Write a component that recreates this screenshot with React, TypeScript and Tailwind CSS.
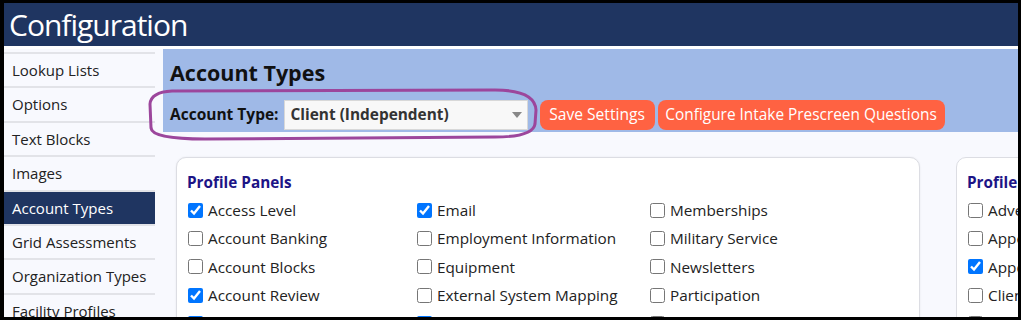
import React from "react";

const font = { fontFamily: '"Open Sans", "Noto Sans", Arial, sans-serif' };

const sideItems = [
  "Lookup Lists",
  "Options",
  "Text Blocks",
  "Images",
  "Account Types",
  "Grid Assessments",
  "Organization Types",
  "Facility Profiles",
];

const col1: [string, boolean][] = [
  ["Access Level", true],
  ["Account Banking", false],
  ["Account Blocks", false],
  ["Account Review", true],
  ["Addresses", true],
];
const col2: [string, boolean][] = [
  ["Email", true],
  ["Employment Information", false],
  ["Equipment", false],
  ["External System Mapping", false],
  ["Financial", true],
];
const col3: [string, boolean][] = [
  ["Memberships", false],
  ["Military Service", false],
  ["Newsletters", false],
  ["Participation", false],
  ["Phone", false],
];
const col4: [string, boolean][] = [
  ["Advertising", false],
  ["Appeals", false],
  ["Appointments", true],
  ["Client Status", false],
  ["Contacts", false],
];

function Check({ label, checked }: { label: string; checked: boolean }) {
  return (
    <label className="flex items-center h-[28.4px] whitespace-nowrap text-[15.3px] text-[#222]">
      <input
        type="checkbox"
        defaultChecked={checked}
        className="w-[15px] h-[15px] m-0 mr-[5px] accent-[#0075ff] shrink-0"
      />
      <span>{label}</span>
    </label>
  );
}

function Col({ items, w }: { items: [string, boolean][]; w: string }) {
  return (
    <div className={`flex flex-col ${w}`}>
      {items.map(([l, c]) => (
        <Check key={l} label={l} checked={c} />
      ))}
    </div>
  );
}

export default function App() {
  return (
    <div
      className="relative w-[1021px] h-[320px] overflow-hidden bg-black pt-[3px] pl-[4px] pr-[3px] pb-[3px]"
      style={font}
    >
      <div className="w-full h-full overflow-hidden bg-[#f8f9fe] flex flex-col">
        <div className="h-[43px] shrink-0 bg-[#1f3561] text-white text-[30px] leading-[43px] pl-[5px] tracking-[-1px]">
          Configuration
        </div>
        <div className="h-[3px] shrink-0 bg-white" />
        <div className="flex flex-1 min-h-0">
          <div className="w-[151px] shrink-0 pt-[3px] flex flex-col">
            {sideItems.map((s) => (
              <div
                key={s}
                className={`h-[34.4px] shrink-0 border-t-[2px] border-[#e2e3e8] flex items-center pl-[8px] text-[15px] whitespace-nowrap ${
                  s === "Account Types"
                    ? "bg-[#1f3561] text-white border-[#1f3561]"
                    : "text-[#222]"
                }`}
              >
                {s}
              </div>
            ))}
          </div>
          <div className="flex-1 ml-[8px] min-w-0 flex flex-col">
            <div className="h-[83px] shrink-0 bg-[#9fb9e7] pl-[7px] flex flex-col">
              <div className="text-[21.5px] font-bold text-[#111] leading-[26px] mt-[11px]">
                Account Types
              </div>
              <div className="flex items-center mt-[14px] h-[30px]">
                <span className="text-[15.5px] font-bold text-[#111] mr-[5px]">
                  Account Type:
                </span>
                <div className="relative w-[244px] h-[30px] bg-[#f8f8f8] border border-[#d8d8d8] flex items-center pl-[6px] text-[15.4px] font-bold text-[#333]">
                  Client (Independent)
                  <svg
                    className="absolute right-[5px] top-[11px]"
                    width="10"
                    height="6"
                    viewBox="0 0 10 6"
                  >
                    <path d="M0 0 L10 0 L5 6 Z" fill="#888" />
                  </svg>
                </div>
                <button className="ml-[12px] h-[30px] w-[115px] rounded-[8px] bg-[#ff6242] text-white text-[15.6px] whitespace-nowrap">
                  Save Settings
                </button>
                <button className="ml-[3px] h-[30px] w-[287px] rounded-[8px] bg-[#ff6242] text-white text-[15.4px] whitespace-nowrap">
                  Configure Intake Prescreen Questions
                </button>
              </div>
            </div>
            <div className="flex pl-[13px] pt-[25px] gap-[36px]">
              <div className="w-[744px] shrink-0 h-[200px] bg-white border border-[#dcdde3] rounded-[10px] pl-[11px] pt-[14px] shadow-[0_0_2px_rgba(0,0,0,0.08)]">
                <div className="text-[15.3px] font-bold text-[#1c1486] leading-[20px] mb-[4px] -ml-[1px]">
                  Profile Panels
                </div>
                <div className="flex">
                  <Col items={col1} w="w-[229px]" />
                  <Col items={col2} w="w-[233px]" />
                  <Col items={col3} w="w-[200px]" />
                </div>
              </div>
              <div className="w-[300px] shrink-0 h-[200px] bg-white border border-[#dcdde3] rounded-[10px] pl-[11px] pt-[14px]">
                <div className="text-[15.3px] font-bold text-[#1c1486] leading-[20px] mb-[4px] -ml-[1px] whitespace-nowrap">
                  Profile Sections
                </div>
                <Col items={col4} w="w-[250px]" />
              </div>
            </div>
          </div>
        </div>
      </div>
      <svg
        className="absolute left-0 top-0 pointer-events-none"
        width="1021"
        height="320"
        viewBox="0 0 1021 320"
      >
        <path
          d="M 172 91 L 495 90 Q 535 90 536 110 L 535 124 Q 533 137 495 137 L 205 139 Q 152 139 151 128 L 150 104 Q 151 92 172 91 Z"
          fill="none"
          stroke="#9c469c"
          strokeWidth="3"
        />
      </svg>
    </div>
  );
}
